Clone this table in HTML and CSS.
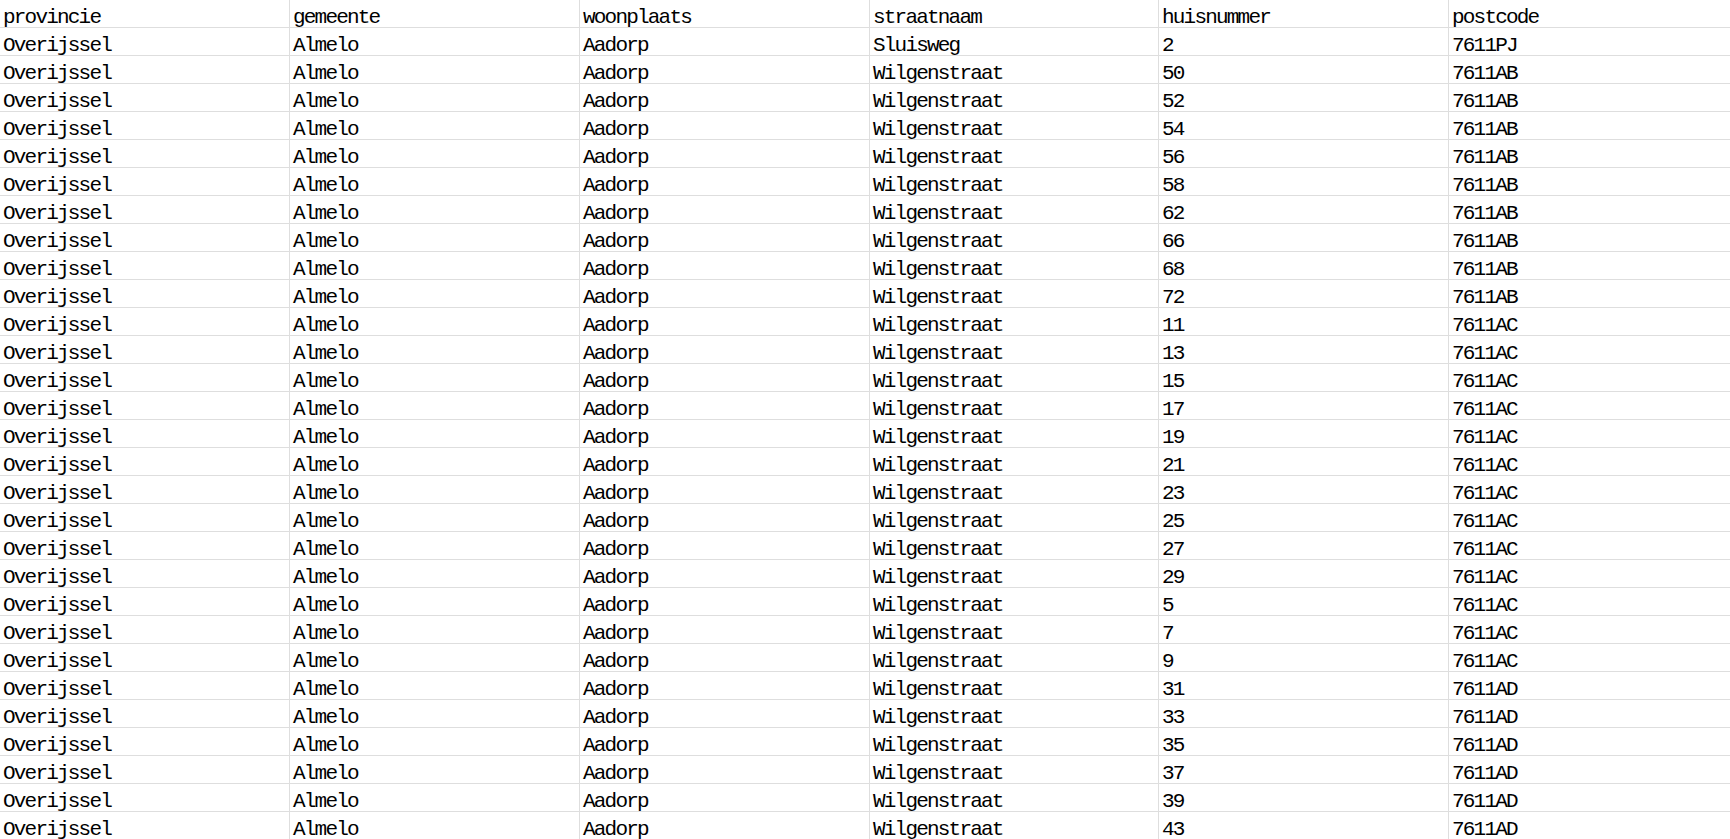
FILE: index.html
```html
<!DOCTYPE html>
<html>
<head>
<meta charset="utf-8">
<link rel="stylesheet" href="styles.css">
</head>
<body>
<div class="sheet">
  <div class="row"><div class="cell">provincie</div><div class="cell">gemeente</div><div class="cell">woonplaats</div><div class="cell">straatnaam</div><div class="cell">huisnummer</div><div class="cell">postcode</div></div>
  <div class="row"><div class="cell">Overijssel</div><div class="cell">Almelo</div><div class="cell">Aadorp</div><div class="cell">Sluisweg</div><div class="cell">2</div><div class="cell">7611PJ</div></div>
  <div class="row"><div class="cell">Overijssel</div><div class="cell">Almelo</div><div class="cell">Aadorp</div><div class="cell">Wilgenstraat</div><div class="cell">50</div><div class="cell">7611AB</div></div>
  <div class="row"><div class="cell">Overijssel</div><div class="cell">Almelo</div><div class="cell">Aadorp</div><div class="cell">Wilgenstraat</div><div class="cell">52</div><div class="cell">7611AB</div></div>
  <div class="row"><div class="cell">Overijssel</div><div class="cell">Almelo</div><div class="cell">Aadorp</div><div class="cell">Wilgenstraat</div><div class="cell">54</div><div class="cell">7611AB</div></div>
  <div class="row"><div class="cell">Overijssel</div><div class="cell">Almelo</div><div class="cell">Aadorp</div><div class="cell">Wilgenstraat</div><div class="cell">56</div><div class="cell">7611AB</div></div>
  <div class="row"><div class="cell">Overijssel</div><div class="cell">Almelo</div><div class="cell">Aadorp</div><div class="cell">Wilgenstraat</div><div class="cell">58</div><div class="cell">7611AB</div></div>
  <div class="row"><div class="cell">Overijssel</div><div class="cell">Almelo</div><div class="cell">Aadorp</div><div class="cell">Wilgenstraat</div><div class="cell">62</div><div class="cell">7611AB</div></div>
  <div class="row"><div class="cell">Overijssel</div><div class="cell">Almelo</div><div class="cell">Aadorp</div><div class="cell">Wilgenstraat</div><div class="cell">66</div><div class="cell">7611AB</div></div>
  <div class="row"><div class="cell">Overijssel</div><div class="cell">Almelo</div><div class="cell">Aadorp</div><div class="cell">Wilgenstraat</div><div class="cell">68</div><div class="cell">7611AB</div></div>
  <div class="row"><div class="cell">Overijssel</div><div class="cell">Almelo</div><div class="cell">Aadorp</div><div class="cell">Wilgenstraat</div><div class="cell">72</div><div class="cell">7611AB</div></div>
  <div class="row"><div class="cell">Overijssel</div><div class="cell">Almelo</div><div class="cell">Aadorp</div><div class="cell">Wilgenstraat</div><div class="cell">11</div><div class="cell">7611AC</div></div>
  <div class="row"><div class="cell">Overijssel</div><div class="cell">Almelo</div><div class="cell">Aadorp</div><div class="cell">Wilgenstraat</div><div class="cell">13</div><div class="cell">7611AC</div></div>
  <div class="row"><div class="cell">Overijssel</div><div class="cell">Almelo</div><div class="cell">Aadorp</div><div class="cell">Wilgenstraat</div><div class="cell">15</div><div class="cell">7611AC</div></div>
  <div class="row"><div class="cell">Overijssel</div><div class="cell">Almelo</div><div class="cell">Aadorp</div><div class="cell">Wilgenstraat</div><div class="cell">17</div><div class="cell">7611AC</div></div>
  <div class="row"><div class="cell">Overijssel</div><div class="cell">Almelo</div><div class="cell">Aadorp</div><div class="cell">Wilgenstraat</div><div class="cell">19</div><div class="cell">7611AC</div></div>
  <div class="row"><div class="cell">Overijssel</div><div class="cell">Almelo</div><div class="cell">Aadorp</div><div class="cell">Wilgenstraat</div><div class="cell">21</div><div class="cell">7611AC</div></div>
  <div class="row"><div class="cell">Overijssel</div><div class="cell">Almelo</div><div class="cell">Aadorp</div><div class="cell">Wilgenstraat</div><div class="cell">23</div><div class="cell">7611AC</div></div>
  <div class="row"><div class="cell">Overijssel</div><div class="cell">Almelo</div><div class="cell">Aadorp</div><div class="cell">Wilgenstraat</div><div class="cell">25</div><div class="cell">7611AC</div></div>
  <div class="row"><div class="cell">Overijssel</div><div class="cell">Almelo</div><div class="cell">Aadorp</div><div class="cell">Wilgenstraat</div><div class="cell">27</div><div class="cell">7611AC</div></div>
  <div class="row"><div class="cell">Overijssel</div><div class="cell">Almelo</div><div class="cell">Aadorp</div><div class="cell">Wilgenstraat</div><div class="cell">29</div><div class="cell">7611AC</div></div>
  <div class="row"><div class="cell">Overijssel</div><div class="cell">Almelo</div><div class="cell">Aadorp</div><div class="cell">Wilgenstraat</div><div class="cell">5</div><div class="cell">7611AC</div></div>
  <div class="row"><div class="cell">Overijssel</div><div class="cell">Almelo</div><div class="cell">Aadorp</div><div class="cell">Wilgenstraat</div><div class="cell">7</div><div class="cell">7611AC</div></div>
  <div class="row"><div class="cell">Overijssel</div><div class="cell">Almelo</div><div class="cell">Aadorp</div><div class="cell">Wilgenstraat</div><div class="cell">9</div><div class="cell">7611AC</div></div>
  <div class="row"><div class="cell">Overijssel</div><div class="cell">Almelo</div><div class="cell">Aadorp</div><div class="cell">Wilgenstraat</div><div class="cell">31</div><div class="cell">7611AD</div></div>
  <div class="row"><div class="cell">Overijssel</div><div class="cell">Almelo</div><div class="cell">Aadorp</div><div class="cell">Wilgenstraat</div><div class="cell">33</div><div class="cell">7611AD</div></div>
  <div class="row"><div class="cell">Overijssel</div><div class="cell">Almelo</div><div class="cell">Aadorp</div><div class="cell">Wilgenstraat</div><div class="cell">35</div><div class="cell">7611AD</div></div>
  <div class="row"><div class="cell">Overijssel</div><div class="cell">Almelo</div><div class="cell">Aadorp</div><div class="cell">Wilgenstraat</div><div class="cell">37</div><div class="cell">7611AD</div></div>
  <div class="row"><div class="cell">Overijssel</div><div class="cell">Almelo</div><div class="cell">Aadorp</div><div class="cell">Wilgenstraat</div><div class="cell">39</div><div class="cell">7611AD</div></div>
  <div class="row"><div class="cell">Overijssel</div><div class="cell">Almelo</div><div class="cell">Aadorp</div><div class="cell">Wilgenstraat</div><div class="cell">43</div><div class="cell">7611AD</div></div>
</div>
</body>
</html>
```
FILE: styles.css
```css
html, body {
  margin: 0;
  padding: 0;
  background: #ffffff;
  overflow: hidden;
}
.sheet {
  display: flex;
  flex-direction: column;
  width: 1730px;
}
.row {
  display: grid;
  grid-template-columns: 290px 290px 290px 289px 290px 1fr;
  height: 28px;
}
.cell {
  box-sizing: border-box;
  height: 28px;
  border-right: 1px solid #dedede;
  border-bottom: 1px solid #dedede;
  padding: 3px 0 0 3px;
  font-family: "Liberation Mono", "Courier New", monospace;
  font-size: 21px;
  letter-spacing: -1.8px;
  line-height: 29px;
  color: #000000;
  white-space: nowrap;
  overflow: hidden;
}
.cell:last-child {
  border-right: none;
}
```
